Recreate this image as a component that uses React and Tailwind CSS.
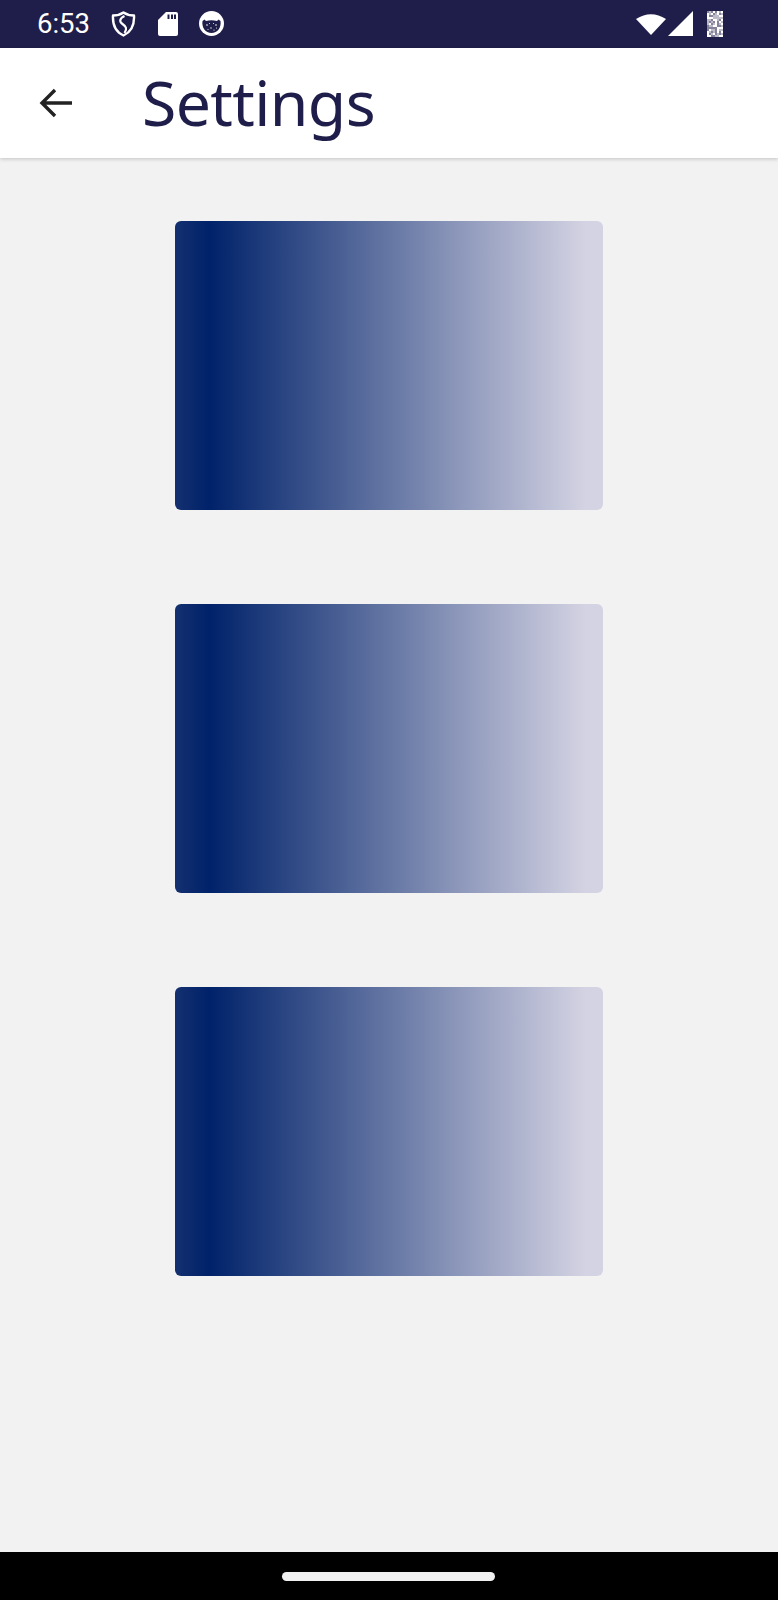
const Card = () => (
  <div className="w-[428px] h-[289px] shrink-0 rounded-[6px] bg-[linear-gradient(90deg,#14306f_0%,#00226a_8%,#d4d3e3_96%,#d4d3e3_100%)]" />
);

// speckled icon in the status bar
const noise = [];
for (let y = 0; y < 26; y += 2) {
  for (let x = 0; x < 16; x += 2) {
    const v = (x * 7 + y * 13 + ((x * y) % 5) * 11) % 9;
    noise.push({ x, y, o: v < 3 ? 0.45 : v < 6 ? 0.7 : 1 });
  }
}

export default function App() {
  return (
    <div className="h-[1600px] w-full flex flex-col bg-[#f2f2f2] overflow-hidden">
      {/* status bar */}
      <div className="h-[47.5px] shrink-0 bg-[#1f1e4a] flex items-center justify-between text-white">
        <div className="flex items-center pl-[37px]">
          <span className="font-['Roboto',sans-serif] text-[27.5px] leading-none w-[74px]">6:53</span>
          <svg width="25" height="26" viewBox="0 0 25 26">
            <path d="M12.5 1.5 C15.5 3.5 19 4.5 23 4.5 C23.5 13 21.5 20.5 12.5 24.5 C3.5 20.5 1.5 13 2 4.5 C6 4.5 9.5 3.5 12.5 1.5 Z" fill="none" stroke="white" strokeWidth="2.4" strokeLinejoin="round" />
            <path d="M13.5 5 C8.5 7.5 8 10.5 11.5 13 C15 15.5 16.5 17.5 13.5 22" fill="none" stroke="white" strokeWidth="2.2" />
          </svg>
          <svg width="20" height="24" viewBox="0 0 20 24" className="ml-[22px]">
            <path fillRule="evenodd" d="M8 0 H18 A2 2 0 0 1 20 2 V22 A2 2 0 0 1 18 24 H2 A2 2 0 0 1 0 22 V8 Z M9.5 2.5 V7 H11.5 V2.5 Z M13 2.5 V7 H15 V2.5 Z M16 2.5 V7 H18 V2.5 Z" fill="white" />
          </svg>
          <svg width="25" height="25" viewBox="0 0 25 25" className="ml-[21px]">
            <circle cx="12.5" cy="12.5" r="12.5" fill="white" />
            <path d="M3.5 10 L5.5 8.5 L7 10 Q12.5 8.5 18 10 L19.5 8.5 L21.5 10 C22.5 16.5 18.5 22 12.5 22 C6.5 22 2.5 16.5 3.5 10 Z" fill="#1f1e4a" />
            <circle cx="8" cy="14" r="0.8" fill="white" />
            <circle cx="12" cy="17" r="0.7" fill="white" />
            <circle cx="17" cy="14" r="0.8" fill="white" />
            <circle cx="10.5" cy="12.5" r="0.5" fill="white" />
            <circle cx="15" cy="19" r="0.6" fill="white" />
            <circle cx="9" cy="18.5" r="0.5" fill="white" />
            <circle cx="14.5" cy="12.5" r="0.5" fill="white" />
            <circle cx="17.5" cy="17" r="0.5" fill="white" />
          </svg>
        </div>
        <div className="flex items-center pr-[55px]">
          <svg width="30" height="23" viewBox="0 0 30 23">
            <path d="M15 23 L0 7 Q15 -2.5 30 7 Z" fill="white" />
          </svg>
          <svg width="25" height="25" viewBox="0 0 25 25" className="ml-[2px]">
            <path d="M25 0 V25 H0 Z" fill="white" />
          </svg>
          <svg width="16" height="26" viewBox="0 0 16 26" className="ml-[14px]">
            {noise.map((n) => (
              <rect key={`${n.x}-${n.y}`} x={n.x} y={n.y} width="2" height="2" fill="white" opacity={n.o} />
            ))}
          </svg>
        </div>
      </div>

      {/* toolbar */}
      <div className="h-[110.5px] shrink-0 bg-white flex items-center shadow-[0_1px_4px_rgba(0,0,0,0.2)] z-10">
        <svg width="34" height="32" viewBox="0 0 34 32" className="ml-[39px] text-[#222]">
          <path d="M33 16 H3 M16 3 L3 16 L16 29" fill="none" stroke="currentColor" strokeWidth="3.4" />
        </svg>
        <h1 className="ml-[69px] pb-[2px] font-['Noto_Sans',sans-serif] text-[62.5px] tracking-[-0.6px] leading-none text-[#1f1e4a]">Settings</h1>
      </div>

      {/* cards */}
      <div className="flex-1 flex flex-col items-center gap-[94px] pt-[63px]">
        <Card />
        <Card />
        <Card />
      </div>

      {/* nav bar */}
      <div className="h-[48px] shrink-0 bg-black flex items-center justify-center">
        <div className="w-[213px] h-[9px] mr-[2px] rounded-full bg-[#f1f1f1]" />
      </div>
    </div>
  );
}
